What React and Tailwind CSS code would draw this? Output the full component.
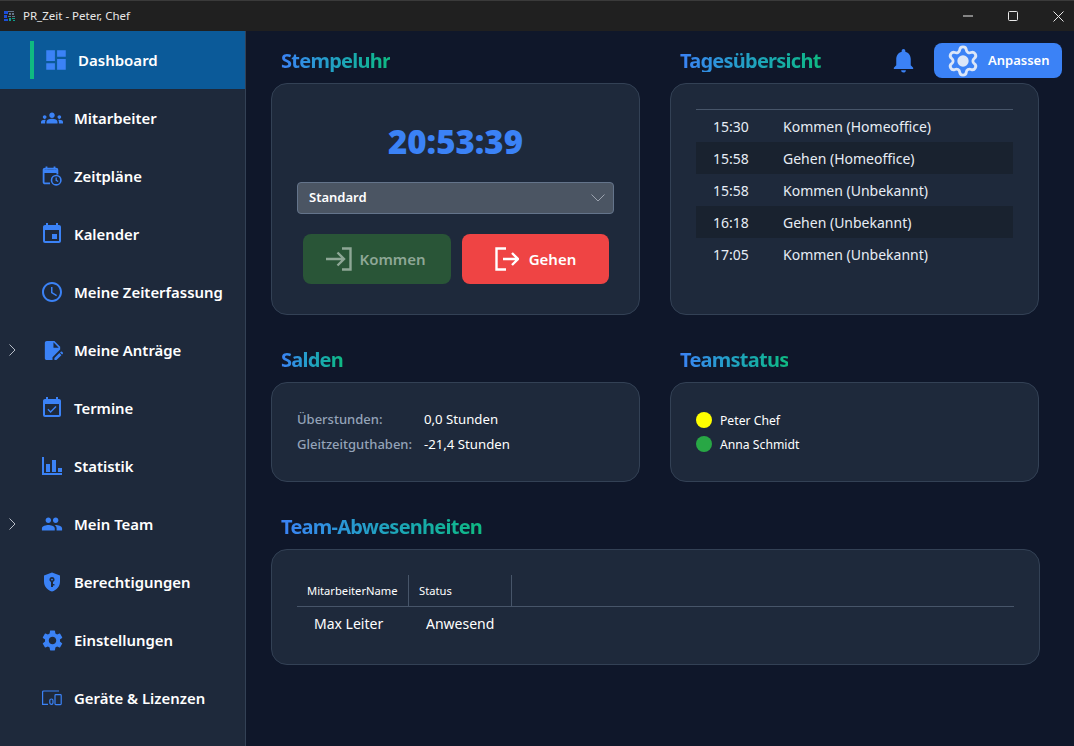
import React from 'react';
import {
    MdDashboard, MdGroups, MdEvent, MdAccessTime, MdEditDocument, MdEventAvailable,
    MdPeople, MdSettings, MdNotifications,
} from 'react-icons/md';
import { Settings as GearIcon } from 'lucide-react';

const ScheduleIcon = ({ className }) => (
    <svg viewBox="0 0 20 20" className={className} fill="none">
        <path d="M4.5 .5v3M12.5 .5v3" stroke="currentColor" strokeWidth="1.8" />
        <path d="M8 17.4H3A1.4 1.4 0 0 1 1.6 16V4A1.4 1.4 0 0 1 3 2.6h11A1.4 1.4 0 0 1 15.4 4v4.5" stroke="currentColor" strokeWidth="1.8" />
        <path d="M2 3.5h13v3.5H2z" fill="currentColor" />
        <circle cx="14.2" cy="14.2" r="4.7" stroke="currentColor" strokeWidth="1.6" />
        <path d="M14.2 11.6v2.8l2 1.1" stroke="currentColor" strokeWidth="1.3" />
    </svg>
);

const ShieldKeyIcon = ({ className }) => (
    <svg viewBox="0 0 20 20" className={className}>
        <path fillRule="evenodd" fill="currentColor" d="M10 .5 18 3.5V9.5C18 14.2 14.7 18.3 10 19.5 5.3 18.3 2 14.2 2 9.5V3.5ZM10 5A2.6 2.6 0 0 0 9 10V15H11V13.5H12.4V12H11V10A2.6 2.6 0 0 0 10 5ZM10 6.7A.9.9 0 1 1 10 8.5.9.9 0 0 1 10 6.7Z" />
    </svg>
);

const DevicesIcon = ({ className }) => (
    <svg viewBox="0 0 20 16" className={className} fill="none" stroke="currentColor" strokeWidth="1.2">
        <path d="M17 1H1.6A1 1 0 0 0 .6 2V14.4H6" />
        <rect x="13" y="4.6" width="6.2" height="10" rx=".8" />
        <rect x="7.8" y="9" width="3.2" height="5.4" rx="1.6" />
    </svg>
);

const StatsIcon = ({ className }) => (
    <svg viewBox="0 0 20 18" className={className} fill="currentColor">
        <path d="M0 0h2v16h18v2H0zM4 7h4v8H4zM10 3h4v12h-4zM16 11h4v4h-4z" />
    </svg>
);

const LoginIcon = ({ className }) => (
    <svg viewBox="0 0 26 24" className={className} fill="none" stroke="currentColor" strokeWidth="2.4">
        <path d="M0 12h17M11.5 5.5 18 12l-6.500 6.500M16 1.500h8.500v21H16" />
    </svg>
);

const LogoutIcon = ({ className }) => (
    <svg viewBox="0 0 24 24" className={className} fill="none" stroke="currentColor" strokeWidth="2.4">
        <path d="M11 1.500H1.500v21H11M8 12h15M17 6l6 6-6 6" />
    </svg>
);

const AppLogo = () => (
    <svg viewBox="0 0 12 12" className="w-3 h-3 ml-1" shapeRendering="crispEdges">
        <path d="M0 1h4v3H0zM0 5h3v3H0zM0 9h4v2H0z" fill="#1d4ed8" />
        <path d="M4 1h6v1H4zM5 3h2v2H5zM8 3h2v2H8zM4 6h3v1H4zM8 6h3v1H8z" fill="#64748b" />
        <path d="M5 8h2v3H5zM8 8h3v1H8zM9 10h2v1H9z" fill="#0f9d8a" />
    </svg>
);

const navItems = [
    { label: 'Dashboard', icon: MdDashboard, active: true, iconClass: 'w-[26px] h-[26px] ml-[9px]' },
    { label: 'Mitarbeiter', icon: MdGroups, iconClass: 'w-[22px] h-[22px]' },
    { label: 'Zeitpläne', icon: ScheduleIcon, iconClass: 'w-5 h-5' },
    { label: 'Kalender', icon: MdEvent, iconClass: 'w-6 h-6' },
    { label: 'Meine Zeiterfassung', icon: MdAccessTime, iconClass: 'w-6 h-6' },
    { label: 'Meine Anträge', icon: MdEditDocument, expandable: true, iconClass: 'w-[23px] h-[23px]' },
    { label: 'Termine', icon: MdEventAvailable, iconClass: 'w-6 h-6' },
    { label: 'Statistik', icon: StatsIcon, iconClass: 'w-5 h-[18px]' },
    { label: 'Mein Team', icon: MdPeople, expandable: true, iconClass: 'w-[22px] h-[22px]' },
    { label: 'Berechtigungen', icon: ShieldKeyIcon, iconClass: 'w-5 h-5' },
    { label: 'Einstellungen', icon: MdSettings, iconClass: 'w-[25px] h-[25px]' },
    { label: 'Geräte & Lizenzen', icon: DevicesIcon, iconClass: 'w-5 h-4' },
];

const bookings = [
    ['15:30', 'Kommen (Homeoffice)'],
    ['15:58', 'Gehen (Homeoffice)'],
    ['15:58', 'Kommen (Unbekannt)'],
    ['16:18', 'Gehen (Unbekannt)'],
    ['17:05', 'Kommen (Unbekannt)'],
];

const Title = ({ children }) => (
    <div className="h-[22px] flex items-center ml-[10px]">
        <h2 className="text-[20px] leading-none font-bold tracking-[-0.75px] bg-gradient-to-r from-[#3b82f6] to-[#10b981] bg-clip-text text-transparent pb-[1px]">
            {children}
        </h2>
    </div>
);

const Card = ({ className, children }) => (
    <div className={`bg-[#1e293b] border border-[#334155] rounded-2xl ${className}`}>{children}</div>
);

const NavItem = ({ item }) => {
    const Icon = item.icon;
    if (item.active) {
        return (
            <div className="h-[58px] bg-[#0b5a99] flex items-center pl-[30px]">
                <div className="w-1 h-[38px] bg-[#10b981]" />
                <Icon className={`text-[#3b82f6] ${item.iconClass}`} />
                <span className="ml-[9px] text-[15px] font-semibold text-white">{item.label}</span>
            </div>
        );
    }
    return (
        <div className="h-[58px] flex items-center">
            <div className="w-[42px] pl-[9px] text-[#b8bec8]">
                {item.expandable && (
                    <svg viewBox="0 0 7 12" className="w-[7px] h-3" fill="none" stroke="currentColor" strokeWidth="1">
                        <path d="M.5 .5 6 6 .5 11.500" />
                    </svg>
                )}
            </div>
            <div className="w-5 h-5 flex items-center justify-center text-[#3b82f6]">
                <Icon className={`shrink-0 ${item.iconClass}`} />
            </div>
            <span className="ml-3 text-[14.9px] font-semibold text-white whitespace-nowrap">{item.label}</span>
        </div>
    );
};

export default function App() {
    return (
        <div className="w-[1074px] h-[746px] overflow-hidden flex flex-col bg-[#0f172a] text-white font-['Noto_Sans',sans-serif]">
            <div className="h-[31px] shrink-0 bg-[#202020] border-t border-[#3a3a3a] flex items-center">
                <AppLogo />
                <span className="ml-[7px] text-[11.5px] text-[#e8e8e8]">PR_Zeit - Peter, Chef</span>
                <div className="ml-auto mr-[10px] flex items-center gap-[35px] text-[#e8e8e8]">
                    <svg viewBox="0 0 10 10" className="w-[10px] h-[10px]" fill="none" stroke="currentColor">
                        <path d="M0 5h10" />
                    </svg>
                    <svg viewBox="0 0 10 10" className="w-[10px] h-[10px]" fill="none" stroke="currentColor">
                        <rect x=".5" y=".5" width="9" height="9" rx="1" />
                    </svg>
                    <svg viewBox="0 0 11 11" className="w-[11px] h-[11px]" fill="none" stroke="currentColor">
                        <path d="M.5 .5l10 10M10.500 .5l-10 10" />
                    </svg>
                </div>
            </div>
            <div className="flex-1 flex min-h-0">
                <nav className="w-[246px] shrink-0 bg-[#1e293b] border-r border-[#334155]">
                    {navItems.map((item) => <NavItem key={item.label} item={item} />)}
                </nav>
                <main className="relative flex-1 pl-[25px] pt-[19px]">
                    <div className="absolute right-[12px] top-[12px] flex items-center">
                        <MdNotifications className="w-[29px] h-[29px] text-[#3b82f6] mr-[16px]" />
                        <button className="w-[128px] h-[35px] rounded-lg bg-[#3b82f6] flex items-center pl-[12px]">
                            <GearIcon className="w-[34px] h-[34px] text-[#dbe6f8] [&_circle]:fill-current" strokeWidth={2} />
                            <span className="ml-[8px] text-[13px] font-semibold">Anpassen</span>
                        </button>
                    </div>
                    <div className="grid grid-cols-[369px_369px] gap-x-[30px]">
                        <div>
                            <Title>Stempeluhr</Title>
                            <Card className="h-[232px] mt-[11px] px-[25px] pt-[39px]">
                                <div className="text-center text-[33px] leading-[38px] font-black text-[#3b82f6]">20:53:39</div>
                                <div className="mt-[21px] h-8 rounded bg-[#4b5563] border border-[#64748b] flex items-center justify-between pl-[11px] pr-[8px]">
                                    <span className="text-[13px] font-semibold">Standard</span>
                                    <svg viewBox="0 0 14 8" className="w-[14px] h-2 text-[#9ca3af]" fill="none" stroke="currentColor">
                                        <path d="M.5 .5 7 7l6.500-6.500" />
                                    </svg>
                                </div>
                                <div className="mt-[20px] pl-[6px] flex gap-[11px]">
                                    <button className="w-[148px] h-[50px] rounded-lg bg-[#295537] text-[#8ea796] flex items-center justify-center gap-[7px] pr-[2px]">
                                        <LoginIcon className="w-[26px] h-6" />
                                        <span className="text-[15px] font-semibold">Kommen</span>
                                    </button>
                                    <button className="w-[147px] h-[50px] rounded-lg bg-[#ef4444] flex items-center justify-center gap-[10px]">
                                        <LogoutIcon className="w-6 h-6" />
                                        <span className="text-[15px] font-semibold">Gehen</span>
                                    </button>
                                </div>
                            </Card>
                        </div>
                        <div>
                            <Title>Tagesübersicht</Title>
                            <Card className="h-[232px] mt-[11px] px-[25px] pt-[25px]">
                                <div className="border-t border-[#475569]">
                                    {bookings.map(([time, text], i) => (
                                        <div key={i} className={`h-8 flex items-center text-[14px] text-[#e7edf5] ${i % 2 === 1 ? 'bg-[#19222f]' : ''}`}>
                                            <span className="w-[87px] pl-[17px]">{time}</span>
                                            <span>{text}</span>
                                        </div>
                                    ))}
                                </div>
                            </Card>
                        </div>
                        <div className="mt-[34px]">
                            <Title>Salden</Title>
                            <Card className="h-[100px] mt-[11px] px-[25px] pt-[24px] text-[13.2px]">
                                <div className="grid grid-cols-[127px_1fr] auto-rows-[25px] items-center">
                                    <span className="font-medium text-[#94a3b8] text-[13px]">Überstunden:</span>
                                    <span>0,0 Stunden</span>
                                    <span className="font-medium text-[#94a3b8] text-[13px]">Gleitzeitguthaben:</span>
                                    <span>-21,4 Stunden</span>
                                </div>
                            </Card>
                        </div>
                        <div className="mt-[34px]">
                            <Title>Teamstatus</Title>
                            <Card className="h-[100px] mt-[11px] px-[25px] pt-[25px] text-[12.2px]">
                                <div className="h-6 flex items-center gap-2">
                                    <span className="w-4 h-4 rounded-full bg-[#ffff00]" />
                                    <span className="pt-[2px]">Peter Chef</span>
                                </div>
                                <div className="h-6 flex items-center gap-2">
                                    <span className="w-4 h-4 rounded-full bg-[#28a745]" />
                                    <span className="pt-[2px]">Anna Schmidt</span>
                                </div>
                            </Card>
                        </div>
                    </div>
                    <div className="mt-[34px] w-[769px]">
                        <Title>Team-Abwesenheiten</Title>
                        <Card className="h-[116px] mt-[11px] px-[25px] pt-[25px]">
                            <div className="flex h-8 border-b border-[#475569] text-[11.2px] items-center">
                                <div className="w-[112px] h-full pl-[10px] pt-[2px] border-r border-[#475569] flex items-center">MitarbeiterName</div>
                                <div className="w-[103px] h-full pl-[10px] pt-[2px] border-r border-[#475569] flex items-center">Status</div>
                            </div>
                            <div className="flex h-8 items-center text-[14px]">
                                <span className="w-[129px] pl-[17px]">Max Leiter</span>
                                <span>Anwesend</span>
                            </div>
                        </Card>
                    </div>
                </main>
            </div>
        </div>
    );
}
